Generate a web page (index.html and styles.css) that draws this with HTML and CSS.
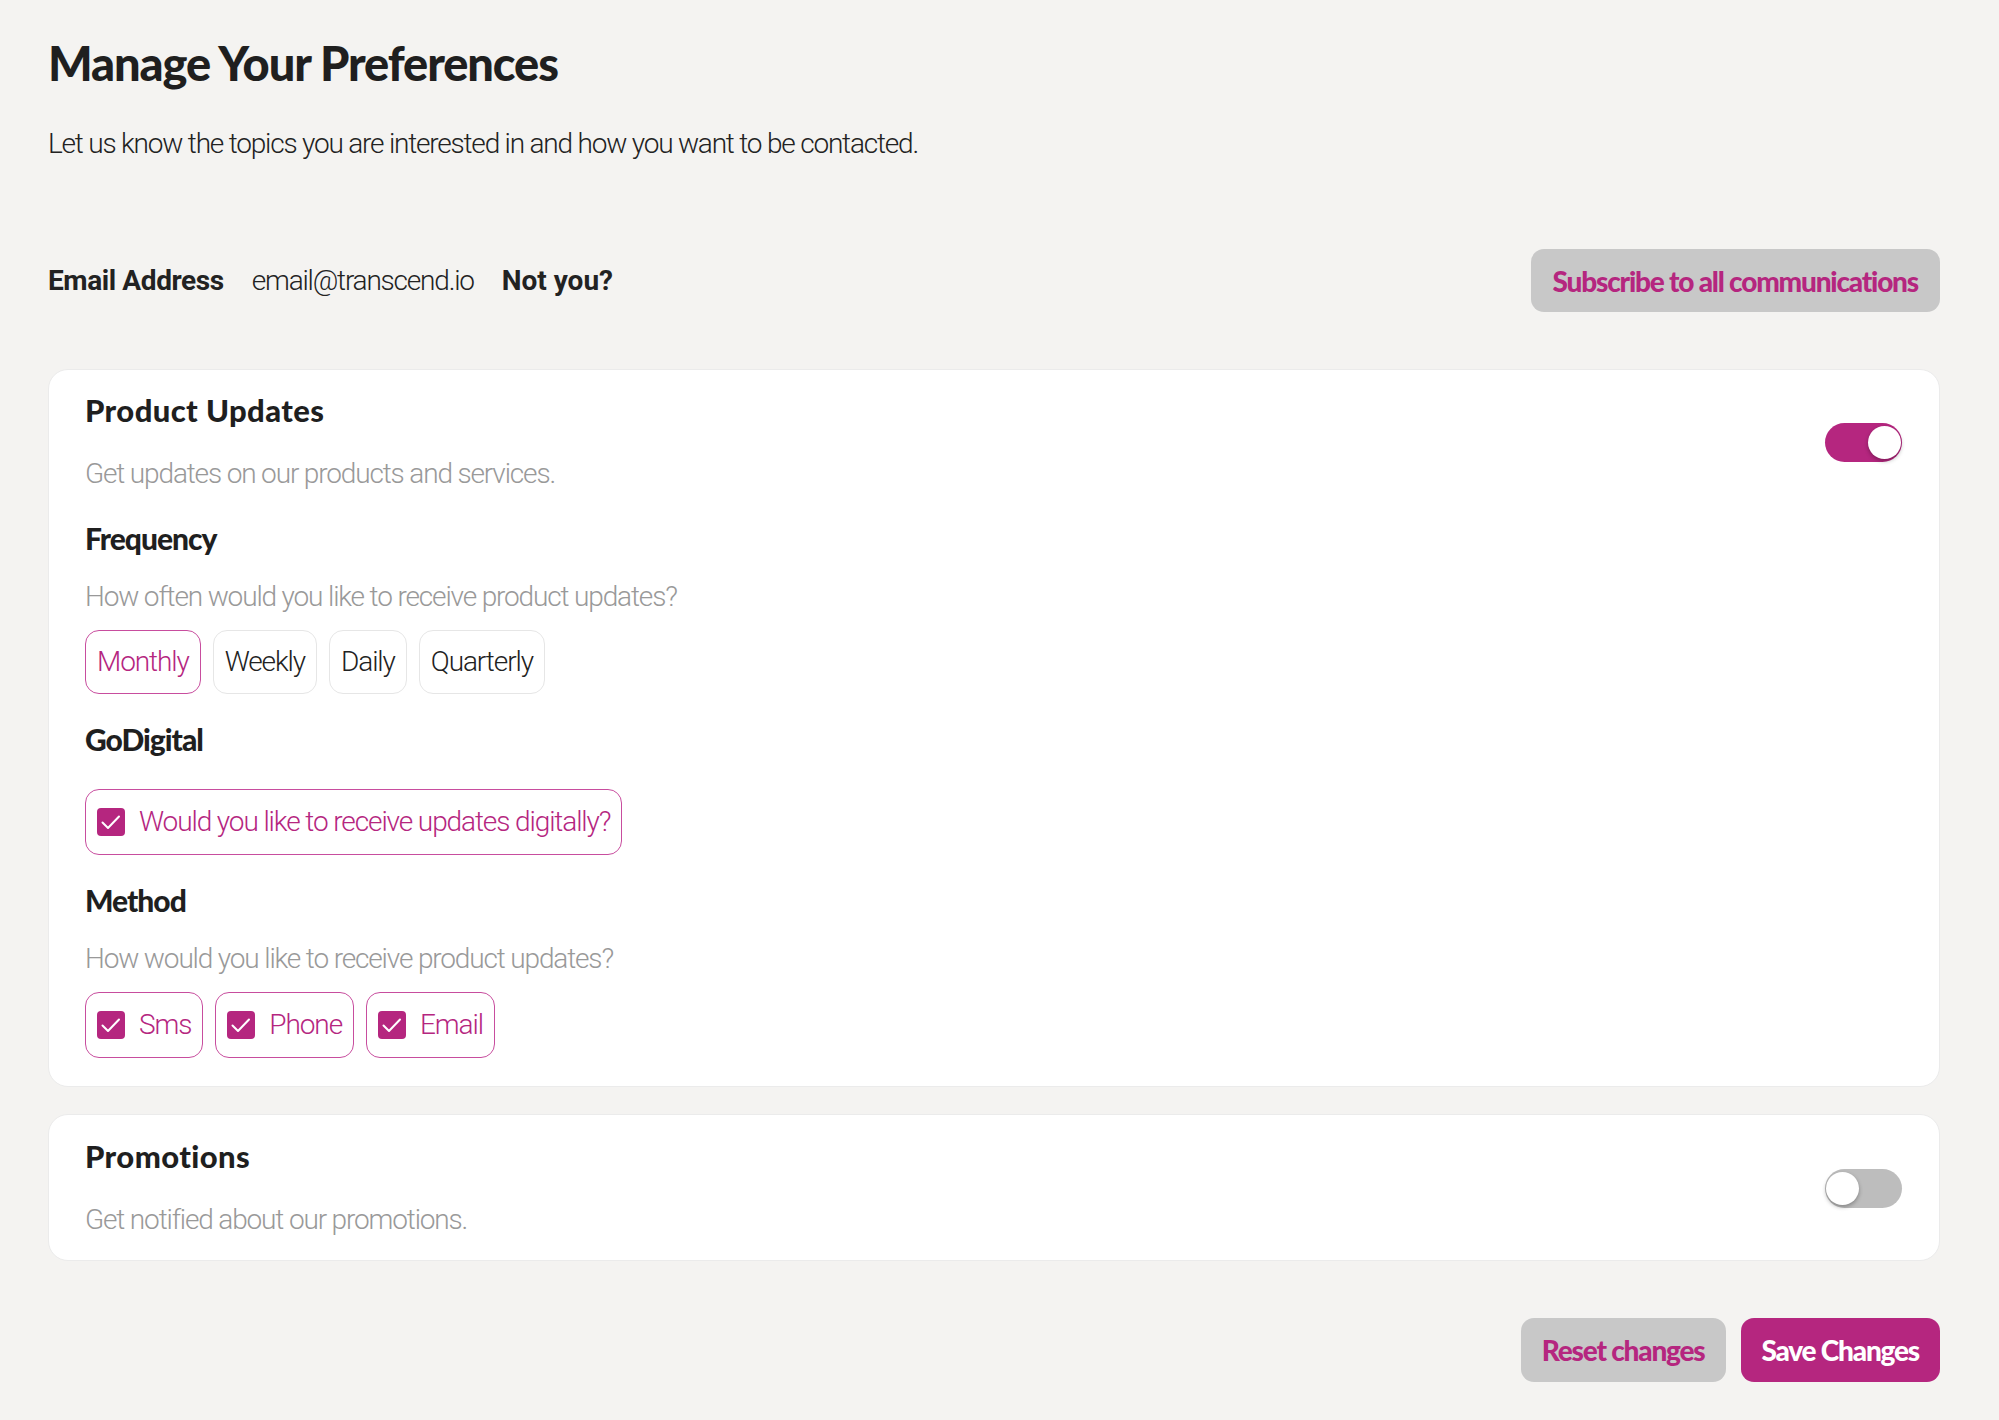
FILE: index.html
```html
<!DOCTYPE html>
<html lang="en">
  <head>
    <meta charset="UTF-8" />
    <meta name="viewport" content="width=device-width, initial-scale=1.0" />
    <title>Manage Your Preferences</title>
    <link rel="stylesheet" href="styles.css">
  </head>
  <body>
    <div class="page">
      <h1 class="title">Manage Your Preferences</h1>
      <p class="intro">Let us know the topics you are interested in and how you want to be contacted.</p>

      <div class="account">
        <span class="account-label">Email Address</span>
        <span class="account-email">email@transcend.io</span>
        <span class="account-switch">Not you?</span>
        <button class="btn btn-grey btn-subscribe">Subscribe to all communications</button>
      </div>

      <div class="card">
        <div class="card-head">
          <div>
            <h2 class="card-title">Product Updates</h2>
            <p class="muted">Get updates on our products and services.</p>
          </div>
          <span class="toggle on"><span class="knob"></span></span>
        </div>

        <div class="section first">
          <h3 class="section-title">Frequency</h3>
          <p class="muted">How often would you like to receive product updates?</p>
          <div class="options">
            <span class="chip selected">Monthly</span>
            <span class="chip">Weekly</span>
            <span class="chip">Daily</span>
            <span class="chip">Quarterly</span>
          </div>
        </div>

        <div class="section">
          <h3 class="section-title">GoDigital</h3>
          <div class="options no-desc">
            <span class="chip check selected">
              <span class="checkbox"><svg viewBox="0 0 28 28"><polyline points="5.5,14.5 11,20 22,8.5" /></svg></span>
              Would you like to receive updates digitally?
            </span>
          </div>
        </div>

        <div class="section">
          <h3 class="section-title">Method</h3>
          <p class="muted">How would you like to receive product updates?</p>
          <div class="options">
            <span class="chip check selected">
              <span class="checkbox"><svg viewBox="0 0 28 28"><polyline points="5.5,14.5 11,20 22,8.5" /></svg></span>
              Sms
            </span>
            <span class="chip check selected">
              <span class="checkbox"><svg viewBox="0 0 28 28"><polyline points="5.5,14.5 11,20 22,8.5" /></svg></span>
              Phone
            </span>
            <span class="chip check selected">
              <span class="checkbox"><svg viewBox="0 0 28 28"><polyline points="5.5,14.5 11,20 22,8.5" /></svg></span>
              Email
            </span>
          </div>
        </div>
      </div>

      <div class="card">
        <div class="card-head">
          <div>
            <h2 class="card-title">Promotions</h2>
            <p class="muted">Get notified about our promotions.</p>
          </div>
          <span class="toggle"><span class="knob"></span></span>
        </div>
      </div>

      <div class="footer">
        <button class="btn btn-grey">Reset changes</button>
        <button class="btn btn-primary">Save Changes</button>
      </div>
    </div>
  </body>
</html>
```

FILE: styles.css
```css
* {
  box-sizing: border-box;
}
body {
  margin: 0;
  padding: 0;
  background-color: #f4f3f1;
  color: #222;
  font-family: "Roboto", "Liberation Sans", sans-serif;
}
.page {
  padding: 35px 59px 40px 48px;
}
.title {
  margin: 0;
  font-family: "Lato", "Liberation Sans", sans-serif;
  font-weight: 900;
  font-size: 47px;
  line-height: 56px;
  letter-spacing: -1.1px;
  color: #1f1f1f;
}
.intro {
  margin: 35px 0 0;
  font-weight: 300;
  font-size: 28px;
  line-height: 36px;
  letter-spacing: -1.2px;
}

/* email row */
.account {
  margin-top: 87px;
  display: flex;
  align-items: center;
  font-size: 28px;
  line-height: 36px;
  letter-spacing: -1.2px;
}
.account-label {
  font-weight: 700;
  letter-spacing: -0.4px;
}
.account-email {
  font-weight: 300;
  margin-left: 28px;
}
.account-switch {
  font-weight: 700;
  letter-spacing: 0;
  margin-left: 28px;
}

.btn {
  height: 64px;
  padding: 0 21px;
  border: none;
  border-radius: 13px;
  font-family: "Lato", "Liberation Sans", sans-serif;
  font-weight: 900;
  font-size: 28px;
  letter-spacing: -1.2px;
  cursor: pointer;
}
.btn-grey {
  background-color: #c8c8c8;
  color: #b5267f;
}
.btn-primary {
  background-color: #b5267f;
  color: #fff;
}
.btn-subscribe {
  margin-left: auto;
  height: 63px;
  padding: 0 22px;
}

/* cards */
.card {
  margin-top: 57px;
  padding: 22px 36px 22px;
  background: #fff;
  border: 1px solid #ebebeb;
  border-radius: 20px;
}
.card + .card {
  margin-top: 27px;
  padding-top: 23px;
}
.card-head {
  display: flex;
  justify-content: space-between;
  align-items: center;
}
.card-title,
.section-title {
  margin: 0;
  font-family: "Lato", "Liberation Sans", sans-serif;
  font-weight: 900;
  font-size: 30px;
  line-height: 36px;
  letter-spacing: -1px;
  color: #1f1f1f;
}
.card-title {
  font-size: 31px;
  letter-spacing: 0.4px;
}
.muted {
  margin: 28px 0 0;
  font-weight: 300;
  font-size: 28px;
  line-height: 36px;
  letter-spacing: -1.15px;
  color: #999;
}
.section {
  margin-top: 27px;
}
.section.first {
  margin-top: 28px;
}
.section:last-child {
  padding-bottom: 6px;
}
.section .muted {
  margin-top: 23px;
}
.options {
  margin-top: 15px;
  display: flex;
  gap: 12px;
}
.options.no-desc {
  margin-top: 32px;
}
.chip {
  display: inline-flex;
  align-items: center;
  gap: 14px;
  height: 64px;
  padding: 0 11px;
  border: 1px solid #e6e6e6;
  border-radius: 14px;
  font-weight: 300;
  font-size: 28px;
  line-height: 36px;
  letter-spacing: -1.1px;
  color: #222;
}
.chip.check {
  height: 66px;
}
.chip.selected {
  border-color: #c84d9e;
  color: #b5267f;
}
.checkbox {
  width: 28px;
  height: 28px;
  border-radius: 4px;
  background-color: #b5267f;
  display: inline-flex;
}
.checkbox svg {
  width: 28px;
  height: 28px;
  fill: none;
  stroke: #fff;
  stroke-width: 2;
  stroke-linecap: round;
  stroke-linejoin: round;
}

/* toggles */
.toggle {
  position: relative;
  flex: none;
  width: 77px;
  height: 39px;
  border-radius: 20px;
  background-color: #bdbdbd;
  margin-right: 1px;
}
.toggle .knob {
  position: absolute;
  top: 3px;
  left: 1px;
  width: 33px;
  height: 33px;
  border-radius: 50%;
  background: #fff;
  box-shadow: 0 2px 4px rgba(0, 0, 0, 0.3);
}
.toggle.on {
  background-color: #b5267f;
}
.toggle.on .knob {
  left: auto;
  right: 1px;
}

.footer {
  margin-top: 57px;
  display: flex;
  justify-content: flex-end;
  gap: 15px;
}
```
